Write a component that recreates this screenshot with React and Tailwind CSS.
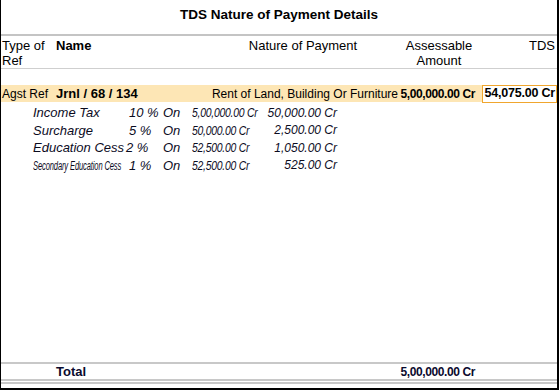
import React from 'react'

const font = { fontFamily: '"Liberation Sans", Arial, sans-serif' }

const taxes = [
  { name: 'Income Tax', pct: '10 %', on: '5,00,000.00 Cr', amt: '50,000.00 Cr', pctCls: 'w-[34px]' },
  { name: 'Surcharge', pct: '5 %', on: '50,000.00 Cr', amt: '2,500.00 Cr', pctCls: 'w-[34px]' },
  { name: 'Education Cess', pct: '2 %', on: '52,500.00 Cr', amt: '1,050.00 Cr', pctCls: 'w-[34px] -ml-[3px] pr-[3px] box-content' },
  { name: 'Secondary Education Cess', pct: '1 %', on: '52,500.00 Cr', amt: '525.00 Cr', pctCls: 'w-[34px]', small: true },
]

function TaxLine({ t }) {
  return (
    <div className="flex items-center h-[17.5px] pl-[32px] italic text-[13px] text-[#0b0b1e] whitespace-nowrap">
      <div className="w-[96px] shrink-0">
        {t.small ? (
          <span className="inline-block text-[12px] scale-x-[0.63] origin-left tracking-[-0.2px]">{t.name}</span>
        ) : (
          t.name
        )}
      </div>
      <div className={`${t.pctCls} shrink-0`}>{t.pct}</div>
      <div className="w-[29px] shrink-0">On</div>
      <div className="w-[70px] shrink-0">
        <span className="inline-block text-[13px] scale-x-[0.8] origin-left tracking-[-0.3px]">{t.on}</span>
      </div>
      <div className="w-[75px] shrink-0 text-right text-[12px]">{t.amt}</div>
    </div>
  )
}

export default function App() {
  return (
    <div style={font} className="w-[559px] h-[390px] bg-white text-black flex flex-col border-l border-r-2 border-b-2 border-black overflow-hidden">
      {/* Title */}
      <div className="h-[34px] shrink-0 flex items-center justify-center pb-[3px] text-[13.5px] font-bold">
        TDS Nature of Payment Details
      </div>
      <div className="h-[2px] shrink-0 bg-[#c4c4c4]" />

      {/* Column headings */}
      <div className="h-[32px] shrink-0 flex pl-[1px] pt-[2px] text-[13px] leading-[15px]">
        <div className="w-[54px] shrink-0">Type of<br />Ref</div>
        <div className="w-[150px] shrink-0 font-bold">Name</div>
        <div className="w-[194px] shrink-0 text-center">Nature of Payment</div>
        <div className="w-[78px] shrink-0 text-center">Assessable<br />Amount</div>
        <div className="flex-1 text-right pr-[2px]">TDS</div>
      </div>
      <div className="h-[1px] shrink-0 bg-[#cfcfcf]" />

      {/* Body */}
      <div className="flex-1 pt-[16px]">
        <div className="flex items-center h-[17px] bg-[#fde6b5] pl-[1px] text-[12px] whitespace-nowrap">
          <div className="w-[54px] shrink-0">Agst Ref</div>
          <div className="w-[150px] shrink-0 font-bold text-[13px]">Jrnl / 68 / 134</div>
          <div className="w-[194px] shrink-0 text-right pr-[2px]">Rent of Land, Building Or Furniture</div>
          <div className="w-[78px] shrink-0 text-right pr-[3px] font-bold tracking-[-0.4px]">5,00,000.00 Cr</div>
          <div className="ml-[4px] flex-1 h-[18px] flex items-center justify-end pr-[1px] border border-[#f0a62e] bg-white font-bold text-[12.5px] tracking-[-0.2px]">
            54,075.00 Cr
          </div>
        </div>
        <div className="pt-[2px]">
          {taxes.map((t) => (
            <TaxLine key={t.name} t={t} />
          ))}
        </div>
      </div>

      {/* Total */}
      <div className="h-[2px] shrink-0 bg-[#c8c8c8]" />
      <div className="h-[15px] shrink-0 flex items-center pl-[1px] text-[13px] font-bold text-[#0a0a2e]">
        <div className="w-[54px] shrink-0" />
        <div className="w-[150px] shrink-0">Total</div>
        <div className="w-[194px] shrink-0" />
        <div className="w-[78px] shrink-0 text-right pr-[3px] text-[12px] tracking-[-0.4px]">5,00,000.00 Cr</div>
      </div>
      <div className="h-[2px] shrink-0 bg-[#c8c8c8]" />
      <div className="h-[1px] shrink-0" />
      <div className="h-[2px] shrink-0 bg-[#c8c8c8]" />
      <div className="h-[4px] shrink-0" />
    </div>
  )
}
